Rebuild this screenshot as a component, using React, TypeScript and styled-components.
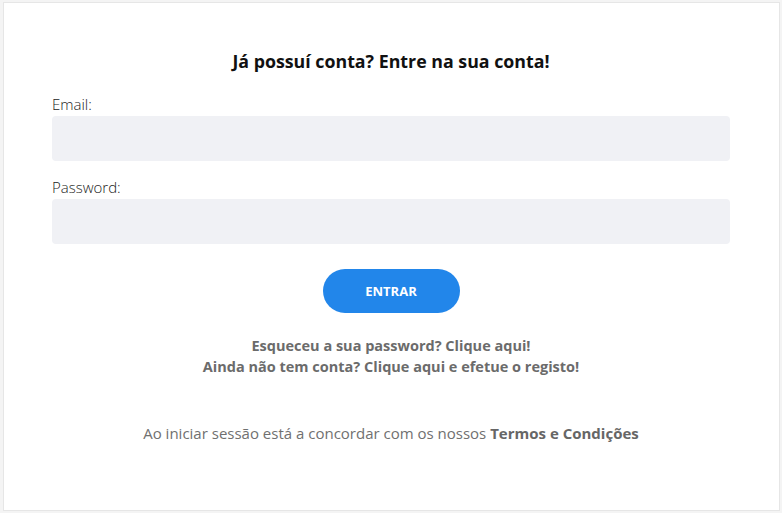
import React, { useState } from 'react';
import styled, { createGlobalStyle } from 'styled-components';

const GlobalStyle = createGlobalStyle`
  html, body {
    margin: 0;
    padding: 0;
    background: #f4f4f4;
  }
  * {
    box-sizing: border-box;
  }
`;

const Page = styled.div`
  padding: 2px 2px 0 3px;
  font-family: 'Open Sans', 'Noto Sans', sans-serif;
`;

const Card = styled.div`
  background: #fff;
  border: 1px solid #e6e6e6;
  padding: 46px 49px 67px 48px;
  display: flex;
  flex-direction: column;
`;

const Title = styled.h2`
  margin: 0 0 21px;
  text-align: center;
  font-size: 17.8px;
  line-height: 24px;
  font-weight: 700;
  color: #111;
`;

const Field = styled.div<{ $gap: number }>`
  display: flex;
  flex-direction: column;
  margin-bottom: ${p => p.$gap}px;
`;

const Label = styled.label`
  font-size: 15px;
  line-height: 20px;
  font-weight: 300;
  color: #222;
  margin-bottom: 2px;
`;

const Input = styled.input`
  height: 45px;
  border: none;
  border-radius: 4px;
  background: #f0f1f5;
  padding: 0 14px;
  font-size: 14px;
  font-family: inherit;
  outline: none;
`;

const SubmitButton = styled.button`
  align-self: center;
  width: 137px;
  height: 44px;
  border: none;
  border-radius: 22px;
  background: #2286ea;
  color: #fff;
  font-family: inherit;
  font-size: 13px;
  font-weight: 700;
  cursor: pointer;
`;

const Links = styled.div`
  margin-top: 22px;
  text-align: center;
  display: flex;
  flex-direction: column;
`;

const LinkText = styled.a`
  font-size: 14.5px;
  line-height: 21px;
  font-weight: 700;
  color: #6b6b6b;
  text-decoration: none;
  cursor: pointer;
`;

const Terms = styled.p`
  margin: 46px 0 0;
  text-align: center;
  font-size: 15px;
  line-height: 20px;
  font-weight: 400;
  color: #707070;

  b {
    font-weight: 700;
    color: #666;
  }
`;

const App: React.FC = () => {
  const [email, setEmail] = useState('');
  const [password, setPassword] = useState('');

  const onSubmit = (e: React.SyntheticEvent<HTMLButtonElement>) => {
    e.preventDefault();
  };

  return (
    <Page>
      <GlobalStyle />
      <Card>
        <Title>Já possuí conta? Entre na sua conta!</Title>
        <Field $gap={16}>
          <Label htmlFor='email'>Email:</Label>
          <Input id='email' value={email} onChange={e => setEmail(e.currentTarget.value)} />
        </Field>
        <Field $gap={25}>
          <Label htmlFor='password'>Password:</Label>
          <Input id='password' type='password' value={password} onChange={e => setPassword(e.currentTarget.value)} />
        </Field>
        <SubmitButton onClick={onSubmit}>ENTRAR</SubmitButton>
        <Links>
          <LinkText>Esqueceu a sua password? Clique aqui!</LinkText>
          <LinkText>Ainda não tem conta? Clique aqui e efetue o registo!</LinkText>
        </Links>
        <Terms>
          Ao iniciar sessão está a concordar com os nossos <b>Termos e Condições</b>
        </Terms>
      </Card>
    </Page>
  );
};

export default App;
